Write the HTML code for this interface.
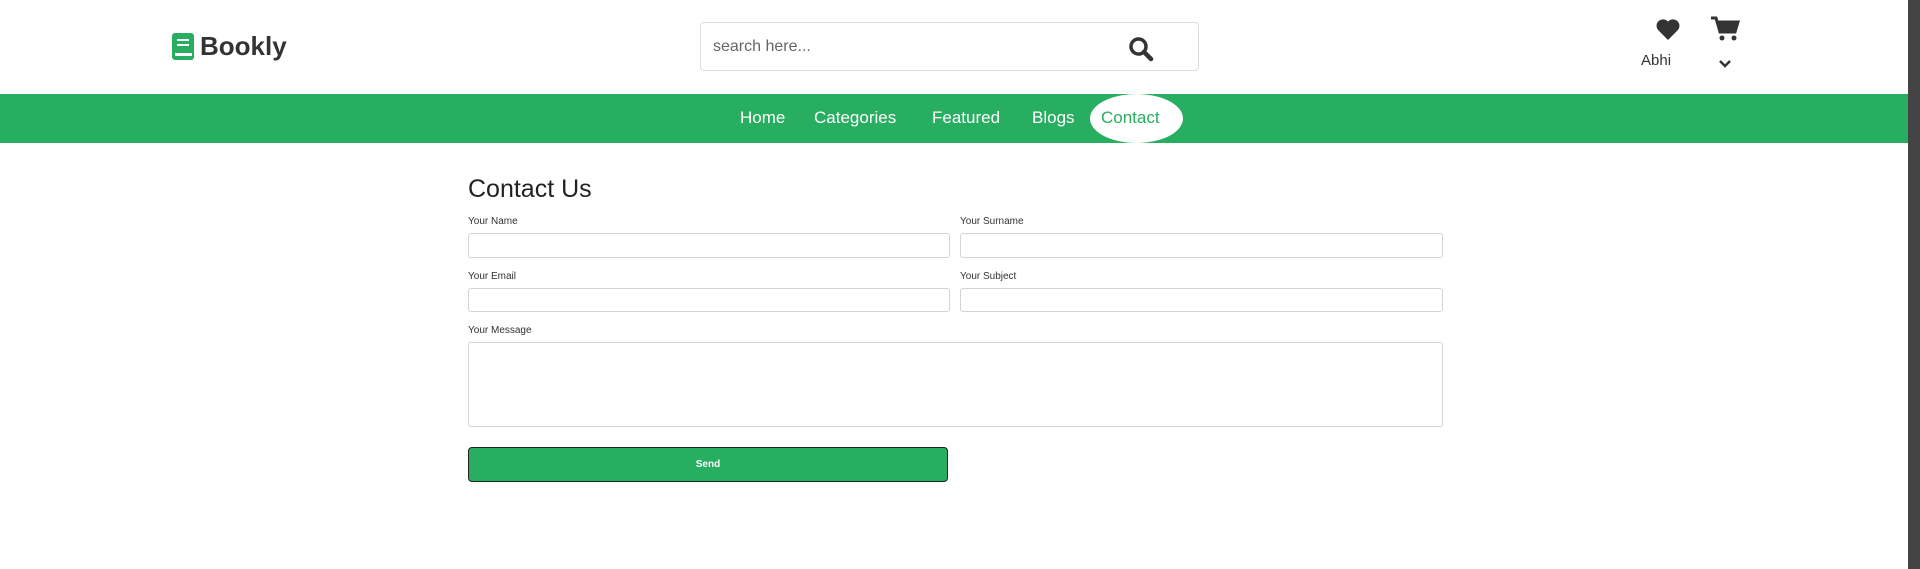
<!DOCTYPE html>
<html><head><meta charset="utf-8"><style>
*{box-sizing:border-box;margin:0;padding:0}
body{width:1920px;height:569px;background:#fff;font-family:"Liberation Sans",sans-serif;position:relative;overflow:hidden;color:#333}
.abs{position:absolute}
.logo{left:172px;top:31px;font-size:26px;font-weight:bold;color:#333;display:flex;align-items:center;gap:6px}
.search{left:700px;top:22px;width:499px;height:49px;border:1px solid #ddd;border-radius:4px}
.search span{position:absolute;left:12px;top:15px;font-size:16px;color:#666}
nav{left:0;top:94px;width:1908px;height:49px;background:#27ae60}
nav a{position:absolute;top:14px;font-size:17px;color:#fff;text-decoration:none}
.pill{position:absolute;left:1090px;top:0;width:93px;height:49px;border-radius:50%;background:#fff}
h1{left:468px;top:175px;font-size:25px;font-weight:normal;color:#222}
label{position:absolute;font-size:10px;color:#333}
.in{position:absolute;border:1px solid #d4d4d4;border-radius:3px;background:#fff}
.btn{left:468px;top:447px;width:480px;height:35px;background:#27ae60;border:1px solid #222;border-radius:4px;color:#fff;font-size:10px;font-weight:bold;text-align:center;line-height:33px}
.sb{left:1908px;top:0;width:12px;height:569px;background:#444}
</style></head><body>
<div class="abs logo"><svg width="22" height="27" viewBox="0 0 22 27"><rect x="0" y="0" width="22" height="27" rx="3" fill="#27ae60"/><rect x="5" y="6" width="12" height="2" fill="#fff"/><rect x="5" y="11" width="12" height="2" fill="#fff"/><rect x="3" y="20" width="17" height="3" fill="#fff"/></svg>Bookly</div>
<div class="abs search"><span>search here...</span>
<svg class="abs" style="left:427px;top:13px" width="26" height="26" viewBox="0 0 26 26"><circle cx="10.5" cy="10.5" r="7.5" fill="none" stroke="#333" stroke-width="3.5"/><line x1="16" y1="16" x2="23" y2="23" stroke="#333" stroke-width="4.5" stroke-linecap="round"/></svg></div>
<svg class="abs" style="left:1655px;top:18px" width="26" height="23" viewBox="0 0 24 22"><path d="M12 21 L2.5 11.5 A5.6 5.6 0 0 1 12 3.5 A5.6 5.6 0 0 1 21.5 11.5 Z" fill="#333"/></svg>
<svg class="abs" style="left:1710px;top:16px" width="30" height="26" viewBox="0 0 30 26"><path d="M1 2h5l4 14h15l3-10H8" fill="none" stroke="#333" stroke-width="3"/><path d="M8 6h20l-3 10H11z" fill="#333"/><circle cx="12" cy="22" r="2.5" fill="#333"/><circle cx="24" cy="22" r="2.5" fill="#333"/></svg>
<div class="abs" style="left:1641px;top:52px;font-size:15px;color:#333">Abhi</div>
<svg class="abs" style="left:1718px;top:59px" width="14" height="10" viewBox="0 0 14 10"><path d="M2 2l5 5 5-5" fill="none" stroke="#333" stroke-width="2.5"/></svg>
<nav class="abs"><div class="pill"></div>
<a style="left:740px">Home</a><a style="left:814px">Categories</a><a style="left:932px">Featured</a><a style="left:1032px">Blogs</a><a style="left:1101px;color:#27ae60">Contact</a></nav>
<h1 class="abs">Contact Us</h1>
<label style="left:468px;top:216px">Your Name</label>
<label style="left:960px;top:216px">Your Surname</label>
<div class="in" style="left:468px;top:233px;width:482px;height:25px"></div>
<div class="in" style="left:960px;top:233px;width:483px;height:25px"></div>
<label style="left:468px;top:271px">Your Email</label>
<label style="left:960px;top:271px">Your Subject</label>
<div class="in" style="left:468px;top:288px;width:482px;height:24px"></div>
<div class="in" style="left:960px;top:288px;width:483px;height:24px"></div>
<label style="left:468px;top:325px">Your Message</label>
<div class="in" style="left:468px;top:342px;width:975px;height:85px"></div>
<div class="abs btn">Send</div>
<div class="abs sb"></div>
</body></html>
